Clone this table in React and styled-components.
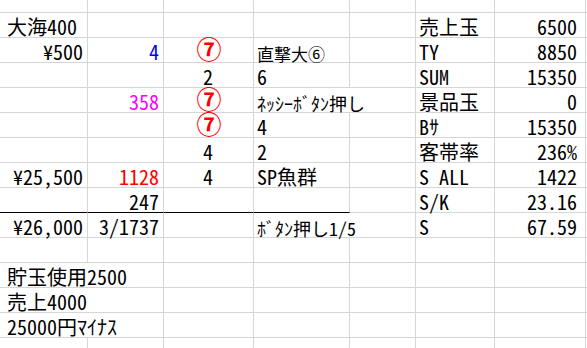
import React from "react";
import styled, { createGlobalStyle } from "styled-components";

const GlobalStyle = createGlobalStyle`
  html, body {
    margin: 0;
    padding: 0;
    background: #fff;
    overflow: hidden;
  }
`;

const Sheet = styled.div`
  display: grid;
  grid-template-columns: 88px 76px 90px 96px 66px 79px 91px 1fr;
  grid-template-rows: 13px repeat(14, 25px);
  width: 587px;
  height: 348px;
  overflow: hidden;
  font-family: "Noto Sans CJK JP", "Noto Sans", sans-serif;
  font-feature-settings: "hwid" 1;
  font-size: 20px;
  color: #000;
`;

const Cell = styled.div`
  box-sizing: border-box;
  display: flex;
  align-items: flex-end;
  justify-content: ${(p) =>
    p.$align === "right" ? "flex-end" : p.$align === "center" ? "center" : "flex-start"};
  grid-column: span ${(p) => p.$span || 1};
  padding: 0 ${(p) => p.$padR ?? 4}px 0 ${(p) => p.$padL ?? 3}px;
  border-right: 1px solid #d6d6d6;
  border-bottom: 1px solid ${(p) => (p.$rule ? "#000" : "#d6d6d6")};
  font-size: ${(p) => p.$size || 20}px;
  line-height: ${(p) => p.$size || 20}px;
  font-weight: ${(p) => (p.$bold ? 700 : 400)};
  color: ${(p) => p.$tone || "inherit"};
  white-space: nowrap;
  overflow: visible;
  min-width: 0;
`;

// circled digits are drawn without the half-width feature so they keep full size
const Mark = styled.span`
  font-feature-settings: normal;
  font-family: "Noto Sans CJK JP", "DejaVu Sans", sans-serif;
  transform: translate(1px, -1px);
`;

const RED = "#ff0000";
const BLUE = "#0000ff";
const PINK = "#ff00ff";

const seven = { t: "⑦", a: "center", c: RED, b: true, z: 25, m: true };

// each row: 8 columns (A..H); null = empty cell, span eats the next cells
const rows = [
  [],
  [{ t: "大海400", l: 7 }, null, null, null, null, { t: "売上玉" }, { t: "6500", a: "right", r: 8 }],
  [
    { t: "¥500", a: "right" },
    { t: "4", a: "right", c: BLUE },
    seven,
    { t: "直撃大⑥", z: 17 },
    null,
    { t: "TY" },
    { t: "8850", a: "right", r: 8 },
  ],
  [null, null, { t: "2", a: "center" }, { t: "6" }, null, { t: "SUM" }, { t: "15350", a: "right", r: 8 }],
  [
    null,
    { t: "358", a: "right", c: PINK },
    seven,
    { t: "ﾈｯｼｰﾎﾞﾀﾝ押し", s: 2, z: 18 },
    { t: "景品玉" },
    { t: "0", a: "right", r: 8 },
  ],
  [null, null, seven, { t: "4" }, null, { t: "Bｻ" }, { t: "15350", a: "right", r: 8 }],
  [null, null, { t: "4", a: "center" }, { t: "2" }, null, { t: "客帯率" }, { t: "236%", a: "right", r: 8 }],
  [
    { t: "¥25,500", a: "right" },
    { t: "1128", a: "right", c: RED },
    { t: "4", a: "center" },
    { t: "SP魚群" },
    null,
    { t: "S ALL" },
    { t: "1422", a: "right", r: 8 },
  ],
  [
    { rule: true },
    { t: "247", a: "right", rule: true },
    { rule: true },
    { rule: true },
    null,
    { t: "S/K" },
    { t: "23.16", a: "right", r: 8 },
  ],
  [
    { t: "¥26,000", a: "right" },
    { t: "3/1737", a: "right" },
    null,
    { t: "ﾎﾞﾀﾝ押し1/5", s: 2, z: 18 },
    { t: "S" },
    { t: "67.59", a: "right", r: 8 },
  ],
  [],
  [{ t: "貯玉使用2500", s: 2, l: 7 }],
  [{ t: "売上4000", s: 2, l: 7 }],
  [{ t: "25000円ﾏｲﾅｽ", s: 2, l: 7 }],
  [],
];

const fillRow = (row) => {
  const out = [];
  let used = 0;
  for (const cell of row) {
    out.push(cell);
    used += (cell && cell.s) || 1;
  }
  while (used < 8) {
    out.push(null);
    used += 1;
  }
  return out;
};

export default function App() {
  return (
    <>
      <GlobalStyle />
      <Sheet>
        {rows.map((row, r) =>
          fillRow(row).map((cell, c) => (
            <Cell
              key={`${r}-${c}`}
              $align={cell?.a}
              $tone={cell?.c}
              $span={cell?.s}
              $size={cell?.z}
              $bold={cell?.b}
              $rule={cell?.rule}
              $padL={cell?.l}
              $padR={cell?.r}
            >
              {cell?.m ? <Mark>{cell.t}</Mark> : cell?.t}
            </Cell>
          ))
        )}
      </Sheet>
    </>
  );
}
